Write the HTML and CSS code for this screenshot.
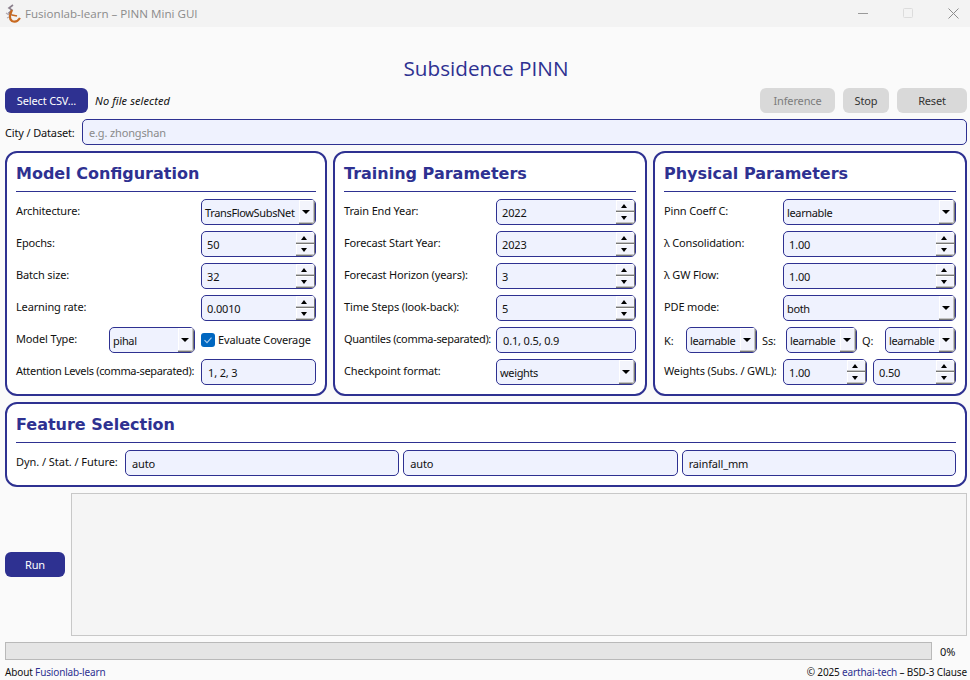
FILE: index.html
```html
<!doctype html>
<html>
<head>
<title>Fusionlab-learn – PINN Mini GUI</title>
<link rel="stylesheet" href="styles.css">
</head>
<body>

<div class="titlebar">
  <svg class="logo" width="18" height="20" viewBox="0 0 18 20">
    <path d="M9 1 L5 4 L8 6 L5 9 L8 11" fill="none" stroke="#8a7f8c" stroke-width="1.6"/>
    <path d="M8 6 C6 10 5 15 8 17 C11 18.5 14 17 16 14" fill="none" stroke="#c8691f" stroke-width="2.2"/>
    <path d="M8 11 L13 12" fill="none" stroke="#c8691f" stroke-width="1.6"/>
    <path d="M2 9 L5 11 M3 14 L5 13" fill="none" stroke="#b0a8b0" stroke-width="1.2"/>
  </svg>
  <span class="wintitle">Fusionlab-learn – PINN Mini GUI</span>
  <div class="winbtns">
    <svg width="11" height="11" viewBox="0 0 11 11"><path d="M0 5.5 H10" stroke="#9a9a9a"/></svg>
    <svg width="11" height="11" viewBox="0 0 11 11"><rect x=".5" y=".5" width="9" height="9" rx="1" fill="none" stroke="#dcdcdc"/></svg>
    <svg width="11" height="11" viewBox="0 0 11 11"><path d="M.5 .5 L10.5 10.5 M10.5 .5 L.5 10.5" stroke="#8c8c8c"/></svg>
  </div>
</div>

<div class="main">
  <h1 class="apptitle">Subsidence PINN</h1>

  <div class="toprow">
    <div class="btn primary w-csv">Select CSV...</div>
    <span class="nofile">No file selected</span>
    <div class="btn grey disabled w-inf">Inference</div>
    <div class="btn grey w-stop">Stop</div>
    <div class="btn grey w-reset">Reset</div>
  </div>

  <div class="cityrow">
    <span class="citylabel">City / Dataset:</span>
    <div class="field grow placeholder">e.g. zhongshan</div>
  </div>

  <div class="cards">

    <div class="card">
      <div class="cardtitle">Model Configuration</div>
      <div class="rows">
        <div class="row">
          <span class="label">Architecture:</span>
          <div class="field select w115"><span class="val">TransFlowSubsNet</span><span class="drop"></span></div>
        </div>
        <div class="row">
          <span class="label">Epochs:</span>
          <div class="field spin w115"><span class="val">50</span><span class="spinbtns"><i class="up"></i><i class="down"></i></span></div>
        </div>
        <div class="row">
          <span class="label">Batch size:</span>
          <div class="field spin w115"><span class="val">32</span><span class="spinbtns"><i class="up"></i><i class="down"></i></span></div>
        </div>
        <div class="row">
          <span class="label">Learning rate:</span>
          <div class="field spin w115"><span class="val">0.0010</span><span class="spinbtns"><i class="up"></i><i class="down"></i></span></div>
        </div>
        <div class="row">
          <span class="label">Model Type:</span>
          <div class="field select w86"><span class="val">pihal</span><span class="drop"></span></div>
          <div class="check w115">
            <svg width="14" height="14" viewBox="0 0 14 14"><rect width="14" height="14" rx="3" fill="#0067c0"/><path d="M3.5 7.2 L6 9.7 L10.5 4.6" fill="none" stroke="#a9cdee" stroke-width="1.1"/></svg>
            <span>Evaluate Coverage</span>
          </div>
        </div>
        <div class="row">
          <span class="label long">Attention Levels (comma-separated):</span>
          <div class="field plain w115">1, 2, 3</div>
        </div>
      </div>
    </div>

    <div class="card">
      <div class="cardtitle">Training Parameters</div>
      <div class="rows">
        <div class="row">
          <span class="label">Train End Year:</span>
          <div class="field spin w140"><span class="val">2022</span><span class="spinbtns"><i class="up"></i><i class="down"></i></span></div>
        </div>
        <div class="row">
          <span class="label">Forecast Start Year:</span>
          <div class="field spin w140"><span class="val">2023</span><span class="spinbtns"><i class="up"></i><i class="down"></i></span></div>
        </div>
        <div class="row">
          <span class="label">Forecast Horizon (years):</span>
          <div class="field spin w140"><span class="val">3</span><span class="spinbtns"><i class="up"></i><i class="down"></i></span></div>
        </div>
        <div class="row">
          <span class="label">Time Steps (look-back):</span>
          <div class="field spin w140"><span class="val">5</span><span class="spinbtns"><i class="up"></i><i class="down"></i></span></div>
        </div>
        <div class="row">
          <span class="label long">Quantiles (comma-separated):</span>
          <div class="field plain w140">0.1, 0.5, 0.9</div>
        </div>
        <div class="row">
          <span class="label">Checkpoint format:</span>
          <div class="field select w140"><span class="val">weights</span><span class="drop"></span></div>
        </div>
      </div>
    </div>

    <div class="card">
      <div class="cardtitle">Physical Parameters</div>
      <div class="rows">
        <div class="row">
          <span class="label">Pinn Coeff C:</span>
          <div class="field select w173"><span class="val">learnable</span><span class="drop"></span></div>
        </div>
        <div class="row">
          <span class="label">λ Consolidation:</span>
          <div class="field spin w173"><span class="val">1.00</span><span class="spinbtns"><i class="up"></i><i class="down"></i></span></div>
        </div>
        <div class="row">
          <span class="label">λ GW Flow:</span>
          <div class="field spin w173"><span class="val">1.00</span><span class="spinbtns"><i class="up"></i><i class="down"></i></span></div>
        </div>
        <div class="row">
          <span class="label">PDE mode:</span>
          <div class="field select w173"><span class="val">both</span><span class="drop"></span></div>
        </div>
        <div class="row">
          <span class="tag tag-k">K:</span>
          <div class="field select w71"><span class="val">learnable</span><span class="drop"></span></div>
          <span class="tag tag-ss">Ss:</span>
          <div class="field select w71"><span class="val">learnable</span><span class="drop"></span></div>
          <span class="tag tag-q">Q:</span>
          <div class="field select w71"><span class="val">learnable</span><span class="drop"></span></div>
        </div>
        <div class="row">
          <span class="label">Weights (Subs. / GWL):</span>
          <div class="field spin w84"><span class="val">1.00</span><span class="spinbtns"><i class="up"></i><i class="down"></i></span></div>
          <div class="field spin w83"><span class="val">0.50</span><span class="spinbtns"><i class="up"></i><i class="down"></i></span></div>
        </div>
      </div>
    </div>
  </div>

  <div class="card feature">
    <div class="cardtitle">Feature Selection</div>
    <div class="row featrow">
      <span class="featlabel">Dyn. / Stat. / Future:</span>
      <div class="field plain grow">auto</div>
      <div class="field plain grow">auto</div>
      <div class="field plain grow">rainfall_mm</div>
    </div>
  </div>

  <div class="logrow">
    <div class="btn primary w-run">Run</div>
    <div class="logbox"></div>
  </div>

  <div class="progressrow">
    <div class="progress"></div>
    <span class="percent">0%</span>
  </div>

  <div class="footer">
    <span>About <a class="link">Fusionlab-learn</a></span>
    <span>© 2025 <a class="link">earthai-tech</a> – BSD-3 Clause</span>
  </div>
</div>

</body>
</html>
```

FILE: styles.css
```css
* {
  box-sizing: border-box;
}

html, body {
  margin: 0;
  height: 680px;
  overflow: hidden;
}

body {
  background: #fafafa;
  color: #111;
  font-family: "Noto Sans", sans-serif;
  font-size: 11px;
  letter-spacing: -0.15px;
}

/* window frame */
.titlebar {
  height: 27px;
  background: #f3f3f3;
  display: flex;
  align-items: center;
  padding-left: 4px;
  letter-spacing: 0;
}

.logo {
  margin-right: 3px;
}

.wintitle {
  color: #8b8b8b;
  font-family: "Open Sans", sans-serif;
  font-size: 11.6px;
}

.winbtns {
  margin-left: auto;
  display: flex;
  gap: 34px;
  padding-right: 11px;
}

.main {
  padding: 0 3px 0 5px;
}

.apptitle {
  height: 61px;
  margin: 0;
  padding-top: 27px;
  text-align: center;
  color: #2e3191;
  font-family: "Open Sans", sans-serif;
  font-size: 20.7px;
  font-weight: 400;
  line-height: 28px;
  letter-spacing: 0;
}

/* buttons */
.btn {
  height: 25px;
  border-radius: 6px;
  display: flex;
  align-items: center;
  justify-content: center;
}

.primary {
  background: #2e3191;
  color: #fff;
}

.grey {
  background: #d9d9d9;
  color: #333;
}

.disabled {
  color: #7c7c7c;
}

.w-csv { width: 83px; }
.w-inf { width: 75px; margin-left: auto; }
.w-stop { width: 46px; margin-left: 8px; }
.w-reset { width: 70px; margin-left: 8px; }
.w-run { width: 60px; }

.toprow {
  display: flex;
  align-items: center;
}

.nofile {
  margin-left: 7px;
  font-style: italic;
  letter-spacing: 0.1px;
}

.cityrow {
  display: flex;
  align-items: center;
  margin-top: 6px;
}

.citylabel {
  width: 77px;
  white-space: nowrap;
}

/* form controls */
.field {
  height: 26px;
  border: 1px solid #2e3191;
  border-radius: 5px;
  background: #eff2fe;
  display: flex;
  align-items: center;
  flex: none;
  overflow: hidden;
  color: #111;
}

.grow {
  flex: 1 1 0;
}

.plain, .placeholder {
  padding: 1px 0 0 6px;
}

.placeholder {
  color: #8a8a8a;
}

.val {
  flex: 1;
  min-width: 0;
  padding: 1px 0 0 3px;
  white-space: nowrap;
}

.select .val {
  letter-spacing: -0.35px;
}

.spin .val {
  padding-left: 5px;
}

.drop {
  position: relative;
  width: 16px;
  height: 100%;
  background: #f3f4fc;
  border-right: 1px solid #777;
  border-bottom: 1px solid #777;
  box-shadow: inset -1px -1px 0 #c4c4c4, inset 1px 1px 0 #fff;
  flex: none;
}

.drop::after {
  content: "";
  position: absolute;
  left: 3px;
  top: 10px;
  border-left: 4px solid transparent;
  border-right: 4px solid transparent;
  border-top: 4px solid #000;
}

.spinbtns {
  width: 19px;
  height: 100%;
  display: flex;
  flex-direction: column;
  flex: none;
}

.spinbtns i {
  position: relative;
  flex: 1;
  background: #f3f4fc;
  border-right: 1px solid #777;
  border-bottom: 1px solid #777;
  box-shadow: inset 0 -1px 0 #c4c4c4, inset 1px 1px 0 #fff;
}

.spinbtns i::after {
  content: "";
  position: absolute;
  left: 5px;
  top: 4px;
  border-left: 3.5px solid transparent;
  border-right: 3.5px solid transparent;
}

.up::after {
  border-bottom: 4px solid #000;
}

.down::after {
  border-top: 4px solid #000;
}

.w71 { width: 71px; }
.w83 { width: 83px; }
.w84 { width: 84px; }
.w86 { width: 86px; }
.w115 { width: 115px; }
.w140 { width: 140px; }
.w173 { width: 173px; }

/* cards */
.cards {
  display: grid;
  grid-template-columns: 322px 314px 314px;
  gap: 6px;
  margin-top: 6px;
}

.card {
  height: 245px;
  padding: 0 9px;
  border: 2px solid #2e3191;
  border-radius: 12px;
  background: #fff;
}

.cardtitle {
  height: 39px;
  padding-top: 11px;
  border-bottom: 1px solid #2e3191;
  color: #2e3191;
  font-family: "DejaVu Sans", sans-serif;
  font-size: 16px;
  font-weight: 700;
  line-height: 20px;
  letter-spacing: 0;
  white-space: nowrap;
}

.rows {
  display: flex;
  flex-direction: column;
  gap: 6px;
  margin-top: 7px;
}

.row {
  display: flex;
  align-items: center;
}

.label {
  flex: 1;
  min-width: 0;
  white-space: nowrap;
  margin-top: -4px;
}

.long {
  letter-spacing: -0.32px;
}

.check {
  display: flex;
  align-items: center;
  gap: 3px;
  margin-left: 6px;
  white-space: nowrap;
}

.check span {
  margin-top: -2px;
}

.tag {
  flex: none;
}

.tag-k { width: 22px; }
.tag-ss { width: 24px; margin-left: 5px; }
.tag-q { width: 23px; margin-left: 5px; }

.w84 + .w83 {
  margin-left: 6px;
}

/* features */
.feature {
  height: 85px;
  margin-top: 6px;
  width: 962px;
}

.featrow {
  margin-top: 7px;
  gap: 4px;
}

.featlabel {
  width: 105px;
  flex: none;
  white-space: nowrap;
  margin-top: -4px;
  letter-spacing: -0.05px;
}

/* log and progress */
.logrow {
  display: flex;
  align-items: center;
  height: 143px;
  margin-top: 6px;
  gap: 6px;
}

.logbox {
  flex: 1;
  height: 100%;
  background: #f5f5f5;
  border: 1px solid #c8c8c8;
}

.progressrow {
  display: flex;
  align-items: center;
  margin-top: 6px;
}

.progress {
  flex: 1;
  height: 18px;
  background: #e5e5e5;
  border: 1px solid #b9b9b9;
}

.percent {
  width: 35px;
  padding-left: 8px;
}

.footer {
  display: flex;
  justify-content: space-between;
  height: 20px;
  padding-top: 4px;
  align-items: center;
  font-size: 10px;
}

.link {
  color: #2e3191;
}
```
